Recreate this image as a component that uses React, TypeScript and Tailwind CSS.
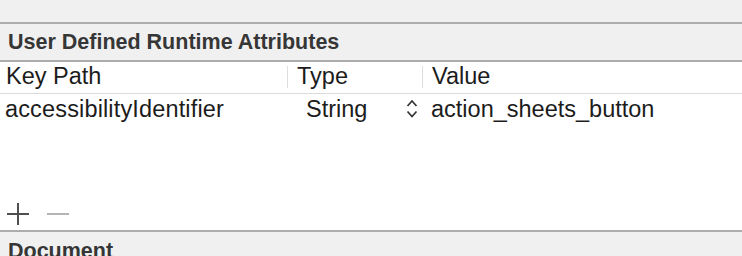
import React from "react";

export default function App() {
  const font = { fontFamily: '"Liberation Sans", Arial, sans-serif' };
  return (
    <div className="w-[742px] h-[256px] overflow-hidden bg-white flex flex-col" style={font}>
      <div className="h-[22px] bg-[#f0f0f0] shrink-0" />
      <div className="h-[2px] bg-[#adadad] shrink-0" />
      <div className="h-[36px] bg-[#f0f0f0] shrink-0 pl-[8px] pt-[6px] text-[21.5px] leading-[25px] font-bold text-[#363636]">
        User Defined Runtime Attributes
      </div>
      <div className="h-[2px] bg-[#adadad] shrink-0" />
      <div className="grid grid-cols-[287px_135px_1fr] h-[31px] shrink-0 text-[23.5px] leading-[26px] text-[#1c1c1c]">
        <div className="pl-[6px] pt-[1px]">Key Path</div>
        <div className="flex">
          <div className="w-px h-[22px] mt-[4px] bg-[#dedede]" />
          <div className="pl-[9px] pt-[1px]">Type</div>
        </div>
        <div className="flex">
          <div className="w-px h-[22px] mt-[4px] bg-[#dedede]" />
          <div className="pl-[9px] pt-[1px]">Value</div>
        </div>
      </div>
      <div className="h-px bg-[#dcdcdc] shrink-0" />
      <div className="grid grid-cols-[287px_135px_1fr] h-[32px] shrink-0 text-[23.5px] leading-[26px] text-[#1c1c1c]">
        <div className="pl-[5px] pt-[2px] tracking-[0.15px]">accessibilityIdentifier</div>
        <div className="flex pl-[19px] pt-[2px] justify-between pr-[4px]">
          <span>String</span>
          <svg width="12" height="19" viewBox="0 0 12 19" className="mt-[3px]">
            <path d="M1.5 7 L6 2 L10.5 7" fill="none" stroke="#333333" strokeWidth="1.7" />
            <path d="M1.5 12.5 L6 17.5 L10.5 12.5" fill="none" stroke="#333333" strokeWidth="1.7" />
          </svg>
        </div>
        <div className="pl-[9px] pt-[2px]">action_sheets_button</div>
      </div>
      <div className="flex-1 flex items-end pb-[5px] pl-[7px] gap-[18px] min-h-0">
        <svg width="22" height="22" viewBox="0 0 22 22">
          <path d="M11 0 V22 M0 11 H22" stroke="#4f4f4f" strokeWidth="2" />
        </svg>
        <svg width="22" height="22" viewBox="0 0 22 22">
          <path d="M0 11 H22" stroke="#b4b4b4" strokeWidth="2" />
        </svg>
      </div>
      <div className="h-[2px] bg-[#adadad] shrink-0" />
      <div className="h-[24px] bg-[#f0f0f0] shrink-0 pl-[8px] pt-[7px] text-[21.5px] leading-[25px] font-bold text-[#363636] overflow-hidden">
        Document
      </div>
    </div>
  );
}
